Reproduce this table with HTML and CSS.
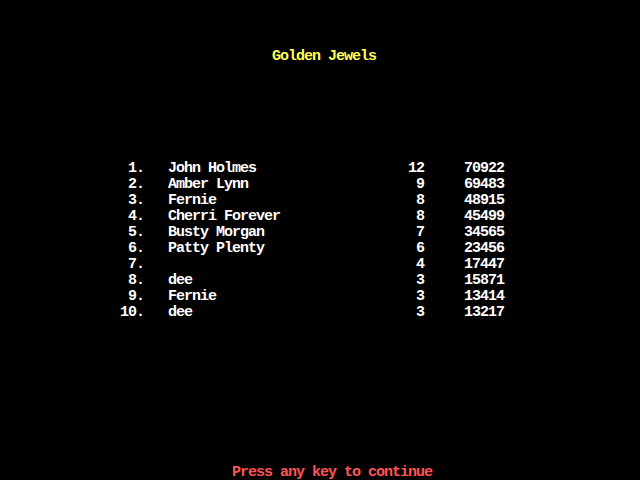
FILE: index.html
```html
<!DOCTYPE html>
<html>
<head>
<meta charset="utf-8">
<title>Golden Jewels</title>
<link rel="stylesheet" href="styles.css">
</head>
<body>
<main class="screen">
  <h1 class="title">Golden Jewels</h1>
  <div class="scores">
    <div class="row"><span class="rank">1.</span><span class="name">John Holmes</span><span class="level">12</span><span class="score">70922</span></div>
    <div class="row"><span class="rank">2.</span><span class="name">Amber Lynn</span><span class="level">9</span><span class="score">69483</span></div>
    <div class="row"><span class="rank">3.</span><span class="name">Fernie</span><span class="level">8</span><span class="score">48915</span></div>
    <div class="row"><span class="rank">4.</span><span class="name">Cherri Forever</span><span class="level">8</span><span class="score">45499</span></div>
    <div class="row"><span class="rank">5.</span><span class="name">Busty Morgan</span><span class="level">7</span><span class="score">34565</span></div>
    <div class="row"><span class="rank">6.</span><span class="name">Patty Plenty</span><span class="level">6</span><span class="score">23456</span></div>
    <div class="row"><span class="rank">7.</span><span class="name"></span><span class="level">4</span><span class="score">17447</span></div>
    <div class="row"><span class="rank">8.</span><span class="name">dee</span><span class="level">3</span><span class="score">15871</span></div>
    <div class="row"><span class="rank">9.</span><span class="name">Fernie</span><span class="level">3</span><span class="score">13414</span></div>
    <div class="row"><span class="rank">10.</span><span class="name">dee</span><span class="level">3</span><span class="score">13217</span></div>
  </div>
  <p class="prompt">Press any key to continue</p>
</main>
</body>
</html>
```
FILE: styles.css
```css
html, body {
  margin: 0;
  padding: 0;
  background: #000;
}
.screen {
  width: 640px;
  height: 480px;
  display: flex;
  flex-direction: column;
  background: #000;
  font-family: "Liberation Mono", "DejaVu Sans Mono", monospace;
  font-weight: bold;
  font-size: 15px;
  letter-spacing: -1px;
  line-height: 18px;
  white-space: pre;
  color: #fff;
  padding-top: 48px;
  box-sizing: border-box;
}
.title {
  margin: 0;
  font: inherit;
  line-height: 18px;
  height: 16px;
  padding-left: 272px;
  color: #ffff55;
}
.scores {
  margin-top: 96px;
  display: flex;
  flex-direction: column;
  padding-left: 120px;
}
.row {
  display: grid;
  grid-template-columns: 24px 240px 40px 80px;
  height: 16px;
}
.rank, .level, .score {
  text-align: right;
}
.name {
  padding-left: 24px;
}
.prompt {
  margin: auto 0 0 0;
  height: 16px;
  padding-left: 232px;
  color: #ff5555;
}
```
